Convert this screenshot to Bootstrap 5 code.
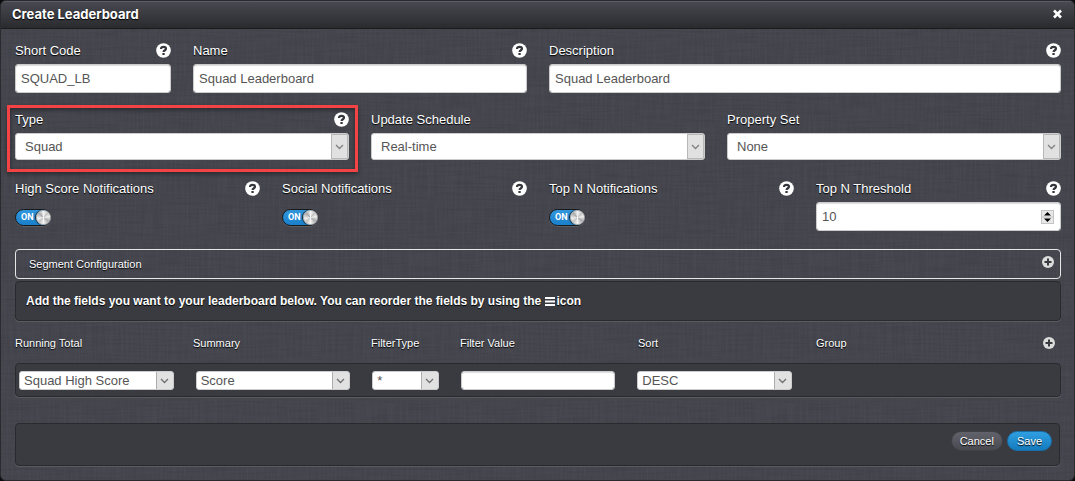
<!DOCTYPE html>
<html lang="en">
<head>
<meta charset="utf-8">
<meta name="viewport" content="width=device-width, initial-scale=1">
<title>Create Leaderboard</title>
<link href="https://cdn.jsdelivr.net/npm/bootstrap@5.3.0/dist/css/bootstrap.min.css" rel="stylesheet">
<style>
  body { background: #0c0c0e; font: 13px/20px "Liberation Sans", Arial, sans-serif; color: #fff; text-shadow: 0 1px 1px #000; }
  .dialog-panel {
    border: 1px solid #2b2b2f; border-radius: 6px; overflow: hidden; background-color: #44454d;
    background-image: url("data:image/svg+xml,%3Csvg xmlns='http://www.w3.org/2000/svg' width='400' height='400'%3E%3Cfilter id='h' x='0' y='0' width='100%25' height='100%25'%3E%3CfeTurbulence type='fractalNoise' baseFrequency='.025 .5' numOctaves='2' stitchTiles='stitch'/%3E%3CfeColorMatrix values='0 0 0 0 0 0 0 0 0 0 0 0 0 0 0 .9 0 0 0 -.35'/%3E%3C/filter%3E%3Cfilter id='v' x='0' y='0' width='100%25' height='100%25'%3E%3CfeTurbulence type='fractalNoise' baseFrequency='.5 .025' numOctaves='2' seed='4' stitchTiles='stitch'/%3E%3CfeColorMatrix values='0 0 0 0 .8 0 0 0 0 .8 0 0 0 0 .9 .9 0 0 0 -.35'/%3E%3C/filter%3E%3Crect width='400' height='400' filter='url(%23h)' opacity='.15'/%3E%3Crect width='400' height='400' filter='url(%23v)' opacity='.07'/%3E%3C/svg%3E");
  }
  .dialog-title { height: 28px; padding: 0 11px 2px; background: linear-gradient(#494952, #2a2b2e); border-bottom: 1px solid #1b1b1d; box-shadow: inset 0 1px #5c5c64; }
  .dialog-title h1 { font: 700 13px/20px Inter, Arial, sans-serif; }
  .dialog-content { padding: 11px 13px 13px 14px; }
  .row { --bs-gutter-x: 22px; }
  .icon-btn { border: 0; padding: 0; background: none; display: flex; }
  .field-head { height: 20px; margin-bottom: 4px; }
  .field-head label { padding-top: 2px; }
  .field-row { margin-bottom: 18px; }
  .form-row-gap { margin-bottom: 16px; }
  .form-control, .form-select { font-size: 13px; line-height: 19px; color: #555; border: 1px solid #ccc; border-radius: 3px; background-color: #fff; }
  .form-control { padding: 4px 5px; height: 29px; box-shadow: inset 0 1px 1px #ddd; }
  .form-select {
    height: 27px; padding: 1px 20px 1px 9px; background-size: 17px 25px; background-position: right center;
    background-image: url("data:image/svg+xml,%3Csvg xmlns='http://www.w3.org/2000/svg' width='17' height='25'%3E%3Crect x='.5' y='.5' width='16' height='24' fill='%23e1e1e1' stroke='%23b8b8b8'/%3E%3Cpath d='M5 11l3.5 3.5L12 11' fill='none' stroke='%23808080' stroke-width='1.3'/%3E%3C/svg%3E");
  }
  .form-select.slim {
    height: 19px; line-height: 17px; padding: 0 18px 0 4px; background-size: 17px 17px;
    background-image: url("data:image/svg+xml,%3Csvg xmlns='http://www.w3.org/2000/svg' width='17' height='17'%3E%3Crect width='17' height='17' fill='%23e1e1e1'/%3E%3Cpath d='M.5 0v17' stroke='%23adadad'/%3E%3Cpath d='M5 7l3.5 3.5L12 7' fill='none' stroke='%23707070' stroke-width='1.3'/%3E%3C/svg%3E");
  }
  .form-control.slim { height: 19px; padding: 0 4px; }
  .stepper {
    appearance: textfield; padding-right: 24px; background-repeat: no-repeat; background-position: right 6px center;
    background-image: url("data:image/svg+xml,%3Csvg xmlns='http://www.w3.org/2000/svg' width='13' height='14'%3E%3Crect x='.5' y='.5' width='12' height='13' fill='%23e8e8e8' stroke='%23c4c4c4'/%3E%3Cpath d='M0 7h13' stroke='%23c4c4c4'/%3E%3Cpath d='M3 5.500L6.500 2 10 5.500zM3 8.500h7L6.500 12z'/%3E%3C/svg%3E");
  }
  .stepper::-webkit-inner-spin-button { appearance: none; margin: 0; }
  .highlight { position: absolute; inset: -4px -9px -12px -8px; border: 3px solid #f44344; box-shadow: 0 2px 4px #0006, inset 0 2px 4px #0006; pointer-events: none; }
  .toggle { position: relative; display: block; width: 36px; height: 17px; margin-top: 11px; }
  .toggle input { appearance: none; display: block; margin: 0; width: 36px; height: 17px; border: 1px solid #16191c; border-radius: 9px; background: linear-gradient(#3296dc, #1a80cb); box-shadow: 0 1px #5d5d64; }
  .toggle .toggle-knob { position: absolute; right: 0; top: 1px; width: 15px; height: 15px; border-radius: 50%; border: 1px solid #bbb; background: conic-gradient(#f5f5f5, #c4c4c4 45deg, #f0f0f0 80deg, #aaa 125deg, #f5f5f5 180deg, #c4c4c4 225deg, #f0f0f0 260deg, #aaa 315deg, #f5f5f5); box-shadow: -1px 0 1px #222; }
  .toggle .toggle-text { position: absolute; left: 6px; top: 0; font: bold 9px/17px Roboto, Arial, sans-serif; text-shadow: none; }
  .segment-bar { height: 30px; border: 1px solid #e6e6e6; border-radius: 4px; padding: 0 6px 0 13px; margin-bottom: 2px; }
  .fine { font-size: 11px; }
  .inset-well { background: #3a3b40; border: 1px solid #2a2a2e; border-radius: 4px; box-shadow: 0 1px #5a5b61; }
  .note-well { height: 40px; padding: 0 10px; margin-bottom: 1px; font-size: 12px; font-weight: bold; }
  .note-well svg { margin-right: 2px; }
  .column-heads { height: 41px; }
  .column-heads .icon-btn { margin-right: 6px; }
  .field-well { height: 34px; padding: 1px 3px 0; margin-bottom: 26px; }
  .action-well { height: 43px; margin: 0 1px 1px 0; padding: 7px; }
  .pill-btn { height: 20px; padding: 0 8px; border-radius: 10px; font-size: 11px; line-height: 18px; color: #fff; border: 1px solid #3f3f46; background: linear-gradient(#62626b, #494951); text-shadow: 0 1px 1px #000; }
  .pill-btn.primary { padding: 0 9px; border-color: #1a6ea8; background: linear-gradient(#2f9fe2, #147bbd); }
</style>
</head>
<body>
<svg class="d-none" aria-hidden="true">
  <symbol id="help" viewBox="0 0 15 15"><circle cx="7.500" cy="7.500" r="7.300" fill="#fff"/><path d="M5 6C5 4.500 6 3.800 7.500 3.800c1.500 0 2.500.8 2.500 1.900 0 1.600-2.400 1.500-2.400 3.400" fill="none" stroke="#35363c" stroke-width="2.200"/><rect x="6.400" y="10" width="2.300" height="2" fill="#35363c"/></symbol>
  <symbol id="plus" viewBox="0 0 12 12"><circle cx="6" cy="6" r="6" fill="#dcdcdc"/><path d="M6 2.500v7M2.500 6h7" stroke="#3a3b40" stroke-width="2"/></symbol>
</svg>

<main class="dialog-panel">
  <header class="dialog-title d-flex align-items-center justify-content-between">
    <h1 class="m-0">Create Leaderboard</h1>
    <button class="icon-btn" type="button" aria-label="Close"><svg width="11" height="10" viewBox="0 0 11 10"><path d="M2 1.500l7 7M9 1.500l-7 7" stroke="#fff" stroke-width="2.600"/></svg></button>
  </header>

  <form class="dialog-content">
    <div class="row form-row-gap">
      <div class="col-2">
        <div class="field-head d-flex align-items-center justify-content-between"><label for="code">Short Code</label><button class="icon-btn" type="button" aria-label="Help"><svg width="15" height="15"><use href="#help"/></svg></button></div>
        <input class="form-control" id="code" type="text" value="SQUAD_LB">
      </div>
      <div class="col-4">
        <div class="field-head d-flex align-items-center justify-content-between"><label for="name">Name</label><button class="icon-btn" type="button" aria-label="Help"><svg width="15" height="15"><use href="#help"/></svg></button></div>
        <input class="form-control" id="name" type="text" value="Squad Leaderboard">
      </div>
      <div class="col-6">
        <div class="field-head d-flex align-items-center justify-content-between"><label for="desc">Description</label><button class="icon-btn" type="button" aria-label="Help"><svg width="15" height="15"><use href="#help"/></svg></button></div>
        <input class="form-control" id="desc" type="text" value="Squad Leaderboard">
      </div>
    </div>

    <div class="row field-row">
      <div class="col-4">
        <div class="position-relative">
          <div class="field-head d-flex align-items-center justify-content-between"><label for="type">Type</label><button class="icon-btn" type="button" aria-label="Help"><svg width="15" height="15"><use href="#help"/></svg></button></div>
          <select class="form-select" id="type"><option>Squad</option></select>
          <div class="highlight"></div>
        </div>
      </div>
      <div class="col-4">
        <div class="field-head d-flex align-items-center"><label for="schedule">Update Schedule</label></div>
        <select class="form-select" id="schedule"><option>Real-time</option></select>
      </div>
      <div class="col-4">
        <div class="field-head d-flex align-items-center"><label for="props">Property Set</label></div>
        <select class="form-select" id="props"><option>None</option></select>
      </div>
    </div>

    <div class="row field-row">
      <div class="col-3">
        <div class="field-head d-flex align-items-center justify-content-between"><label for="high">High Score Notifications</label><button class="icon-btn" type="button" aria-label="Help"><svg width="15" height="15"><use href="#help"/></svg></button></div>
        <label class="toggle"><input id="high" type="checkbox" checked><span class="toggle-text">ON</span><span class="toggle-knob"></span></label>
      </div>
      <div class="col-3">
        <div class="field-head d-flex align-items-center justify-content-between"><label for="social">Social Notifications</label><button class="icon-btn" type="button" aria-label="Help"><svg width="15" height="15"><use href="#help"/></svg></button></div>
        <label class="toggle"><input id="social" type="checkbox" checked><span class="toggle-text">ON</span><span class="toggle-knob"></span></label>
      </div>
      <div class="col-3">
        <div class="field-head d-flex align-items-center justify-content-between"><label for="topn">Top N Notifications</label><button class="icon-btn" type="button" aria-label="Help"><svg width="15" height="15"><use href="#help"/></svg></button></div>
        <label class="toggle"><input id="topn" type="checkbox" checked><span class="toggle-text">ON</span><span class="toggle-knob"></span></label>
      </div>
      <div class="col-3">
        <div class="field-head d-flex align-items-center justify-content-between"><label for="threshold">Top N Threshold</label><button class="icon-btn" type="button" aria-label="Help"><svg width="15" height="15"><use href="#help"/></svg></button></div>
        <input class="form-control stepper" id="threshold" type="number" value="10">
      </div>
    </div>

    <div class="segment-bar fine d-flex align-items-center justify-content-between">
      <span>Segment Configuration</span>
      <button class="icon-btn pb-1" type="button" aria-label="Add segment"><svg width="12" height="12"><use href="#plus"/></svg></button>
    </div>

    <div class="inset-well note-well d-flex align-items-center">
      <span>Add the fields you want to your leaderboard below. You can reorder the fields by using the <svg width="10" height="9" viewBox="0 0 10 9"><path d="M0 1h10M0 4.500h10M0 8h10" stroke="#fff" stroke-width="2"/></svg>icon</span>
    </div>

    <div class="row column-heads fine align-items-center">
      <div class="col-2"><label for="total">Running Total</label></div>
      <div class="col-2"><label for="summary">Summary</label></div>
      <div class="col-1"><label for="ftype">FilterType</label></div>
      <div class="col-2"><label for="fvalue">Filter Value</label></div>
      <div class="col-2"><label for="sort">Sort</label></div>
      <div class="col-3 d-flex align-items-center justify-content-between"><span>Group</span><button class="icon-btn" type="button" aria-label="Add field"><svg width="12" height="12"><use href="#plus"/></svg></button></div>
    </div>

    <div class="inset-well field-well">
      <div class="row h-100 align-items-center">
        <div class="col-2"><select class="form-select slim" id="total"><option>Squad High Score</option></select></div>
        <div class="col-2"><select class="form-select slim" id="summary"><option>Score</option></select></div>
        <div class="col-1"><select class="form-select slim" id="ftype"><option>*</option></select></div>
        <div class="col-2"><input class="form-control slim" id="fvalue" type="text"></div>
        <div class="col-2"><select class="form-select slim" id="sort"><option>DESC</option></select></div>
      </div>
    </div>

    <div class="inset-well action-well d-flex justify-content-end align-items-start gap-1">
      <button class="pill-btn" type="button">Cancel</button>
      <button class="pill-btn primary" type="submit">Save</button>
    </div>
  </form>
</main>
<script src="https://cdn.jsdelivr.net/npm/bootstrap@5.3.0/dist/js/bootstrap.bundle.min.js"></script>
</body>
</html>
